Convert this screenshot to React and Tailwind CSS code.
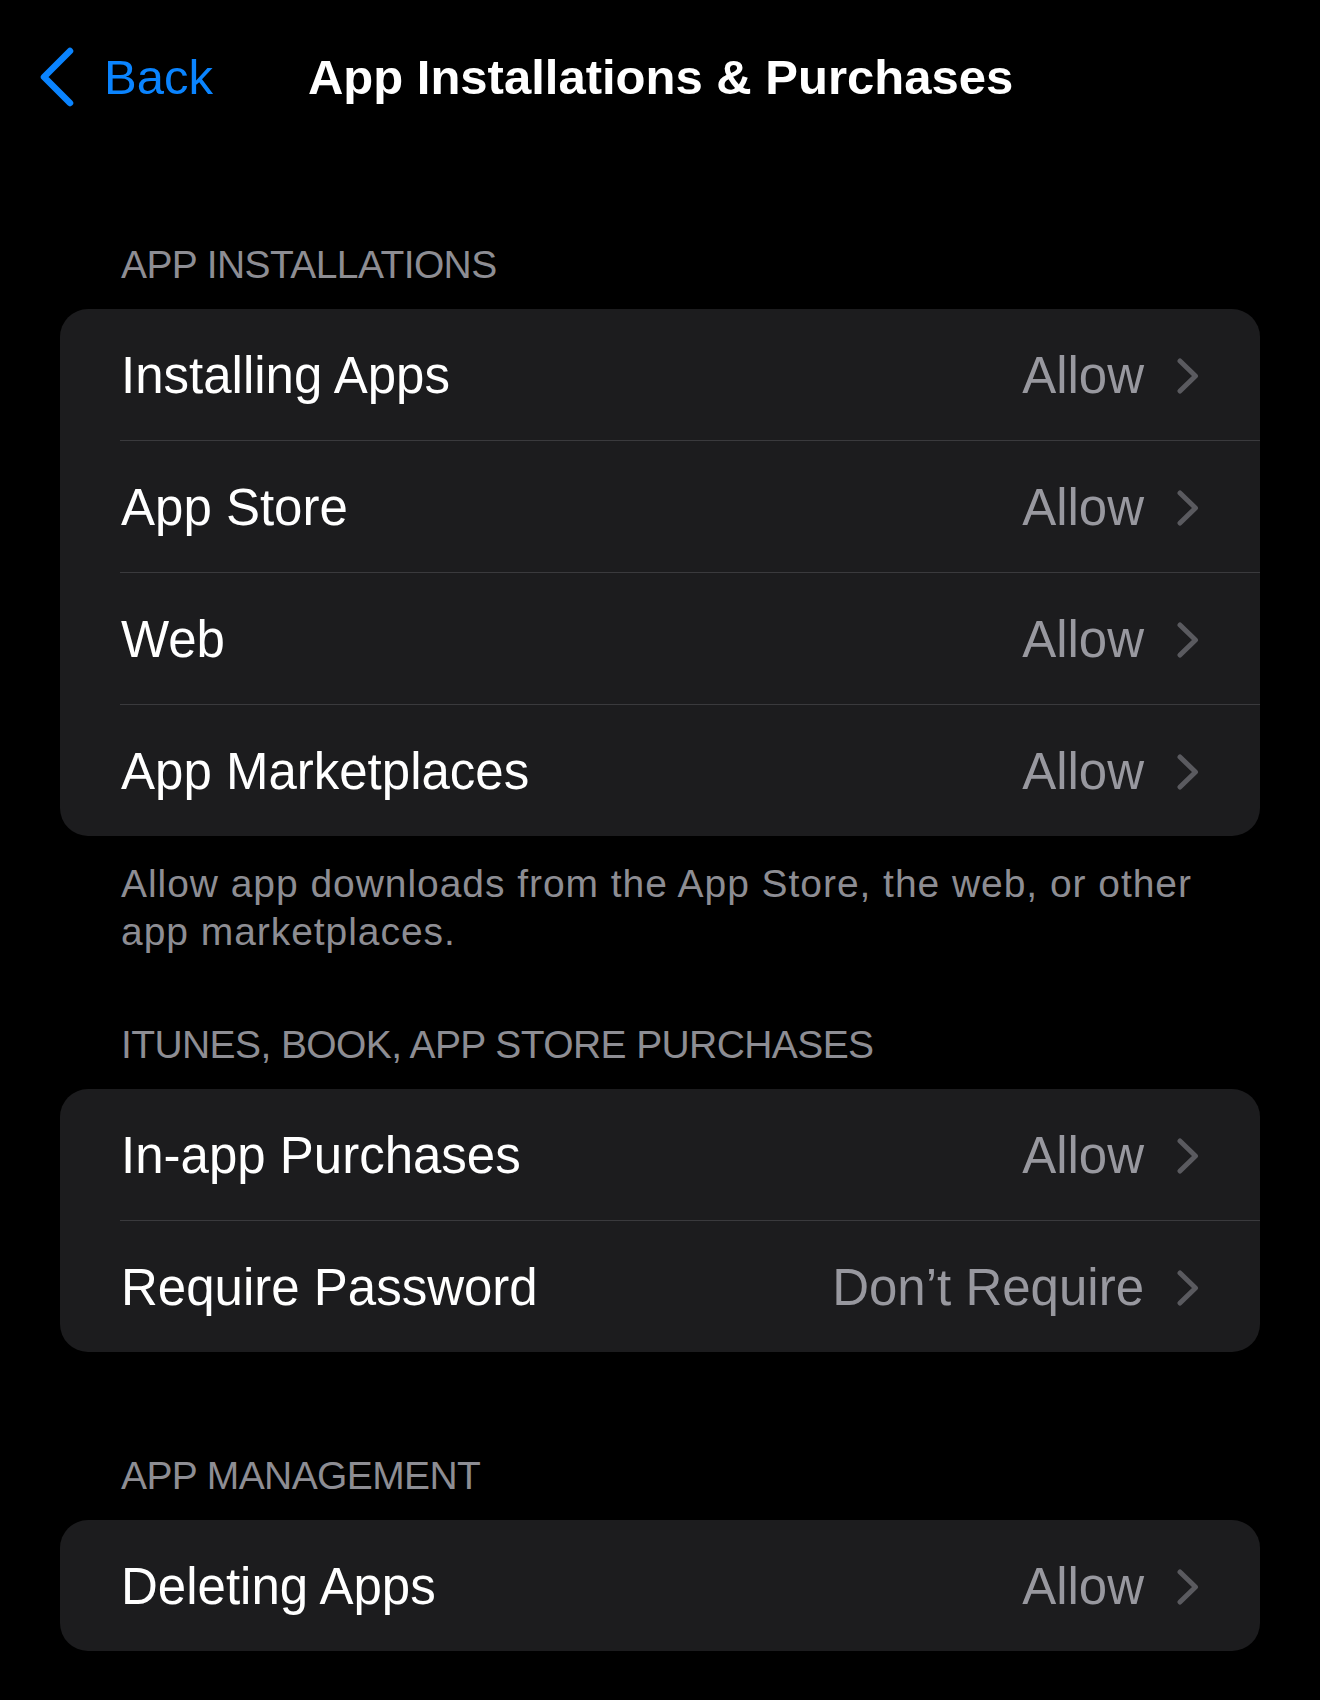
import React from "react";

const sections = [
  {
    title: "APP INSTALLATIONS",
    rows: [
      { label: "Installing Apps", value: "Allow" },
      { label: "App Store", value: "Allow" },
      { label: "Web", value: "Allow" },
      { label: "App Marketplaces", value: "Allow" },
    ],
    footer: "Allow app downloads from the App Store, the web, or other app marketplaces.",
  },
  {
    title: "ITUNES, BOOK, APP STORE PURCHASES",
    rows: [
      { label: "In-app Purchases", value: "Allow" },
      { label: "Require Password", value: "Don\u2019t Require" },
    ],
  },
  {
    title: "APP MANAGEMENT",
    rows: [{ label: "Deleting Apps", value: "Allow" }],
  },
];

const Chevron = () => (
  <svg width="22" height="36" viewBox="0 0 22 36" fill="none">
    <path
      d="M3 3 L18.5 18 L3 33"
      stroke="#5a5a5f"
      strokeWidth="5"
      strokeLinecap="round"
      strokeLinejoin="round"
    />
  </svg>
);

const Row = ({ row, last }) => (
  <div>
    <div className="h-[131px] flex items-center pl-[61px] pr-[61px] pt-[2px]">
      <span className="flex-1 text-[51px] leading-[51px] text-white">{row.label}</span>
      <span className="text-[51px] leading-[51px] text-[#98989f]">{row.value}</span>
      <span className="ml-[33px] flex items-center">
        <Chevron />
      </span>
    </div>
    {!last && <div className="ml-[60px] h-px bg-[#3a3a3d]" />}
  </div>
);

const App = () => {
  return (
    <div
      className="w-[1320px] min-h-[1700px] bg-black"
      style={{ fontFamily: '"Liberation Sans", Arial, sans-serif' }}
    >
      {/* Nav bar */}
      <div className="h-[154px] flex items-center pl-[38px]">
        <svg width="38" height="60" viewBox="0 0 38 60" fill="none">
          <path
            d="M32 4 L6 30 L32 56"
            stroke="#0a84ff"
            strokeWidth="6.5"
            strokeLinecap="round"
            strokeLinejoin="round"
          />
        </svg>
        <span className="ml-[28px] text-[49px] leading-[49px] text-[#0a84ff]">Back</span>
        <span className="ml-[95px] text-[49px] leading-[49px] font-bold text-white">
          App Installations &amp; Purchases
        </span>
      </div>

      <div className="pt-[91px]">
        {sections.map((section, i) => (
          <div key={section.title} className={i === 1 ? "mt-[69px]" : i === 2 ? "mt-[104px]" : ""}>
            <div className="px-[121px] text-[39px] leading-[39px] tracking-[-0.6px] text-[#8d8d93]">
              {section.title}
            </div>
            <div className="mt-[25px] mx-[60px] bg-[#1c1c1e] rounded-[28px] overflow-hidden">
              {section.rows.map((row, j) => (
                <Row key={row.label} row={row} last={j === section.rows.length - 1} />
              ))}
            </div>
            {section.footer && (
              <div className="mt-[24px] px-[121px] text-[39px] leading-[48px] tracking-[0.95px] text-[#8d8d93]">
                {section.footer}
              </div>
            )}
          </div>
        ))}
      </div>
    </div>
  );
};

export default App;
